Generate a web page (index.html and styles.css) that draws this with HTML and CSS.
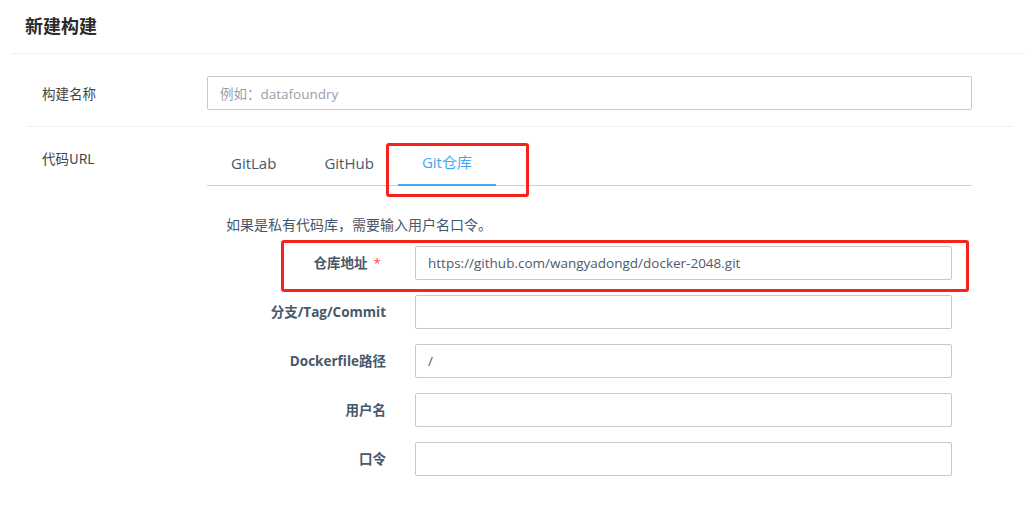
FILE: index.html
```html
<!DOCTYPE html>
<html lang="zh-CN">
<head>
<meta charset="utf-8">
<title>新建构建</title>
<link rel="stylesheet" href="styles.css">
</head>
<body>
<div class="page">
  <div class="header"><h1 class="title">新建构建</h1></div>
  <div class="form">
    <div class="row row-name">
      <div class="row-label">构建名称</div>
      <div class="row-body">
        <div class="input"><span class="placeholder">例如：datafoundry</span></div>
      </div>
    </div>
    <div class="row row-code">
      <div class="row-label">代码URL</div>
      <div class="row-body">
        <div class="tabs">
          <div class="tab">GitLab</div>
          <div class="tab">GitHub</div>
          <div class="tab tab-active">Git仓库<span class="mark mark-tab"></span></div>
        </div>
        <div class="pane">
          <p class="hint">如果是私有代码库，需要输入用户名口令。</p>
          <div class="item">
            <div class="item-label">仓库地址<span class="req">*</span></div>
            <div class="input item-input"><span class="value">https://github.com/wangyadongd/docker-2048.git</span></div>
            <span class="mark mark-item"></span>
          </div>
          <div class="item">
            <div class="item-label">分支/Tag/Commit</div>
            <div class="input item-input"></div>
          </div>
          <div class="item">
            <div class="item-label">Dockerfile路径</div>
            <div class="input item-input"><span class="value">/</span></div>
          </div>
          <div class="item">
            <div class="item-label">用户名</div>
            <div class="input item-input"></div>
          </div>
          <div class="item">
            <div class="item-label">口令</div>
            <div class="input item-input"></div>
          </div>
        </div>
      </div>
    </div>
  </div>
</div>
</body>
</html>
```
FILE: styles.css
```css
* { box-sizing: border-box; }
html, body { margin: 0; padding: 0; background: #fff; }
body {
  font-family: "Open Sans", "Noto Sans CJK SC", sans-serif;
  color: #333;
  width: 1027px;
  height: 514px;
  overflow: hidden;
}
.page { padding: 0 1px 0 11px; }
.header {
  height: 54px;
  padding-left: 14px;
  border-bottom: 1px solid #f0f0f0;
  display: flex;
  align-items: center;
}
.title {
  margin: 0 0 3px 0;
  font-size: 18px;
  font-weight: 700;
  color: #2b2b2b;
  font-family: "Noto Sans CJK SC", sans-serif;
}
.form { margin: 0 13px 0 16px; }
.row {
  display: flex;
  border-bottom: 1px solid #f0f0f0;
}
.row-name { padding: 22px 0 16px; }
.row-code { padding: 14px 0 0; border-bottom: none; }
.row-label {
  width: 180px;
  padding-left: 15px;
  font-family: "Noto Sans CJK SC", sans-serif;
  font-size: 13.5px;
  line-height: 34px;
  color: #444;
  flex: none;
}
.row-body { width: 765px; flex: none; }
.input {
  height: 34px;
  border: 1px solid #c8c8c8;
  border-radius: 2px;
  display: flex;
  align-items: center;
  padding-left: 12px;
  font-size: 13.5px;
  background: #fff;
}
.placeholder { color: #9aa0a8; }
.value { color: #4d5a6c; }
.tabs {
  display: flex;
  height: 45px;
  border-bottom: 1px solid #cfcfcf;
}
.tab {
  position: relative;
  padding: 0 24px;
  line-height: 45px;
  font-size: 15px;
  color: #48576a;
}
.tab-active {
  color: #3fa9f5;
  border-bottom: 2px solid #3fa9f5;
  line-height: 43px;
  margin-bottom: -1px;
}
.mark {
  position: absolute;
  border: 3px solid #f5231b;
  border-radius: 3px;
}
.mark-tab {
  left: -12px;
  top: 2px;
  width: 143px;
  height: 54px;
}
.pane { padding: 0 19px; }
.hint {
  margin: 28px 0 12px;
  font-size: 14px;
  line-height: 20px;
  color: #48576a;
  font-family: "Noto Sans CJK SC", sans-serif;
}
.item {
  position: relative;
  display: flex;
  margin-bottom: 15px;
}
.item-label {
  width: 189px;
  padding-right: 29px;
  text-align: right;
  font-size: 13.5px;
  font-weight: 700;
  color: #48576a;
  line-height: 34px;
  flex: none;
}
.req { color: #ff4949; margin-left: 6px; margin-right: 5px; font-weight: 400; }
.item-input { width: 537px; flex: none; }
.mark-item {
  left: 55px;
  top: -6px;
  width: 688px;
  height: 52px;
}
```
